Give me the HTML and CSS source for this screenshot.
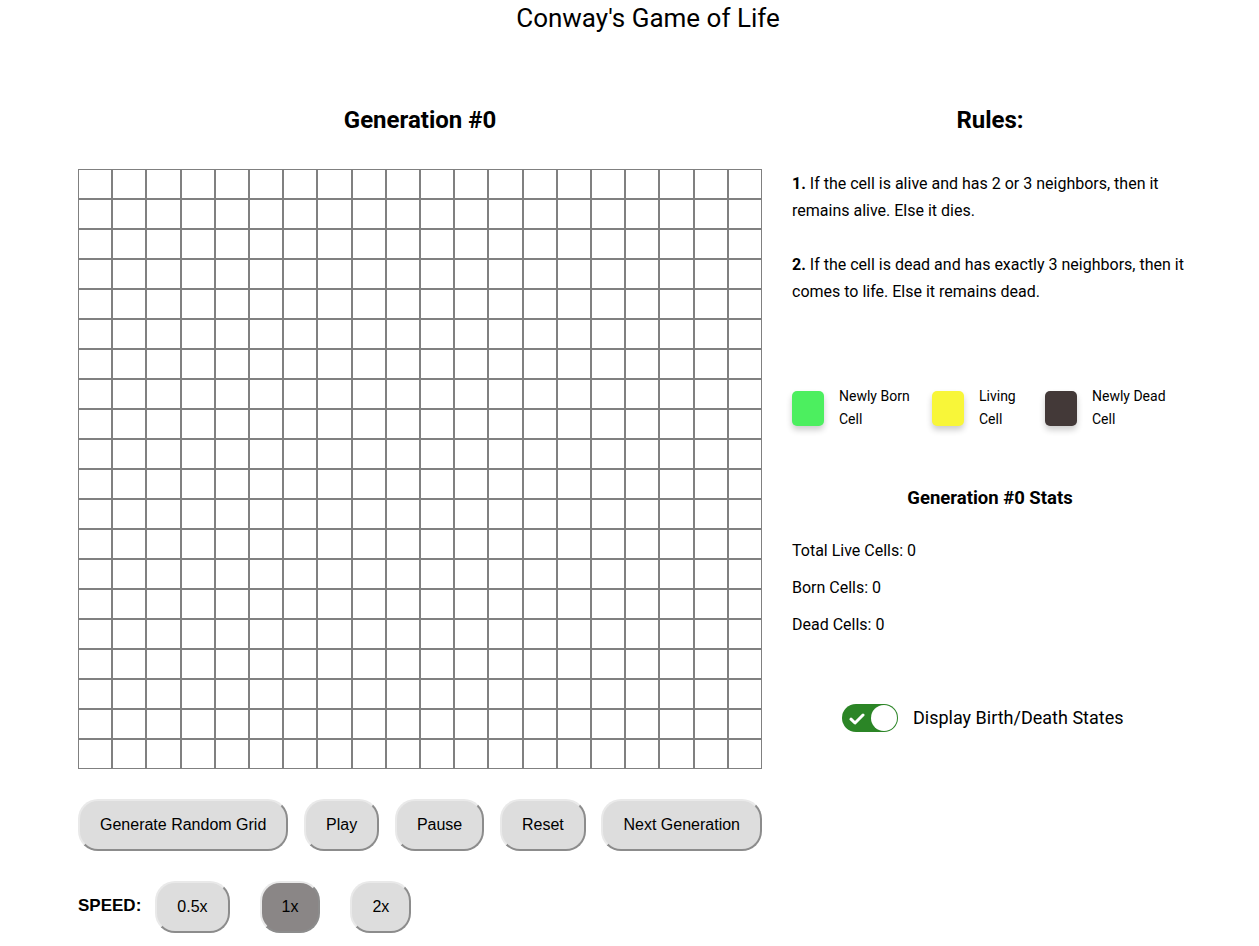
FILE: index.html
```html
<!DOCTYPE html>
<html lang="en">
<head>
<meta charset="utf-8">
<title>Conway's Game of Life</title>
<link rel="stylesheet" href="styles.css">
</head>
<body>
<h1 class="title">Conway's Game of Life</h1>
<main class="layout">
  <section class="board">
    <h2 class="section-title">Generation #0</h2>
    <div class="grid" id="grid"></div>
    <div class="controls">
      <button class="btn">Generate Random Grid</button>
      <button class="btn">Play</button>
      <button class="btn">Pause</button>
      <button class="btn">Reset</button>
      <button class="btn">Next Generation</button>
    </div>
    <div class="speed">
      <span class="speed-label">SPEED:</span>
      <button class="btn speed-btn">0.5x</button>
      <button class="btn speed-btn speed-btn--active">1x</button>
      <button class="btn speed-btn">2x</button>
    </div>
  </section>
  <aside class="side">
    <h2 class="section-title">Rules:</h2>
    <div class="rules">
      <p class="rule"><strong>1.</strong> If the cell is alive and has 2 or 3 neighbors, then it remains alive. Else it dies.</p>
      <p class="rule"><strong>2.</strong> If the cell is dead and has exactly 3 neighbors, then it comes to life. Else it remains dead.</p>
    </div>
    <div class="legend">
      <div class="legend-item">
        <span class="swatch swatch--born"></span>
        <span class="legend-text legend-text--born">Newly Born Cell</span>
      </div>
      <div class="legend-item">
        <span class="swatch swatch--living"></span>
        <span class="legend-text legend-text--living">Living Cell</span>
      </div>
      <div class="legend-item">
        <span class="swatch swatch--dead"></span>
        <span class="legend-text legend-text--dead">Newly Dead Cell</span>
      </div>
    </div>
    <h3 class="stats-title">Generation #0 Stats</h3>
    <div class="stats">
      <p class="stat">Total Live Cells: 0</p>
      <p class="stat">Born Cells: 0</p>
      <p class="stat">Dead Cells: 0</p>
    </div>
    <div class="toggle-row">
      <span class="toggle">
        <svg class="toggle-check" width="16" height="12" viewBox="0 0 16 12"><path d="M2 6.2 L6 10 L14 2" fill="none" stroke="#fff" stroke-width="3" stroke-linecap="round" stroke-linejoin="round"/></svg>
        <span class="toggle-knob"></span>
      </span>
      <span class="toggle-label">Display Birth/Death States</span>
    </div>
  </aside>
</main>
<script>
  (function () {
    var g = document.getElementById('grid');
    for (var i = 0; i < 400; i++) {
      var c = document.createElement('div');
      c.className = 'cell';
      g.appendChild(c);
    }
  })();
</script>
</body>
</html>
```

FILE: styles.css
```css
* { box-sizing: border-box; }

body {
  margin: 0;
  font-family: Roboto, "Liberation Sans", sans-serif;
  color: #000;
  background: #fff;
}

.title {
  margin: 0;
  padding-left: 78px;
  width: 1218px;
  text-align: center;
  font-size: 26px;
  font-weight: 400;
  line-height: 37px;
}

.layout {
  display: flex;
  margin-top: 68px;
  padding-left: 78px;
}

.board {
  width: 684px;
  flex: none;
}

.side {
  width: 396px;
  margin-left: 30px;
  flex: none;
}

.section-title {
  margin: 0;
  text-align: center;
  font-size: 24px;
  font-weight: 700;
  line-height: 30px;
}

.grid {
  margin-top: 34px;
  display: grid;
  grid-template-columns: repeat(20, 1fr);
  grid-auto-rows: 30px;
}

.cell {
  border: 1px solid #808080;
  background: #fff;
}

.controls {
  margin-top: 30px;
  display: flex;
  justify-content: space-between;
}

.btn {
  font-family: "Liberation Sans", Arial, sans-serif;
  font-size: 16px;
  line-height: 18px;
  color: #000;
  background: #dddddd;
  padding: 15px 20px;
  border: 2px solid;
  border-color: #e9e9e9 #8c8c8c #8c8c8c #e9e9e9;
  border-radius: 20px;
}

.speed {
  margin-top: 30px;
  display: flex;
  align-items: center;
}

.speed-label {
  font-family: "Liberation Sans", Arial, sans-serif;
  font-weight: 700;
  font-size: 17px;
  line-height: 18px;
  padding-bottom: 2px;
  margin-right: -1px;
}

.speed-btn {
  margin-left: 15px;
  margin-right: 15px;
}

.speed-btn:last-child { margin-right: 0; }

.speed-btn--active {
  background: #8a8686;
}

.rules {
  margin-top: 35px;
  font-size: 16px;
  line-height: 27px;
}

.rule {
  margin: 0 0 27px;
}

.rule:last-child { margin-bottom: 0; }

.legend {
  margin-top: 80px;
  display: flex;
  align-items: center;
  gap: 15px;
}

.legend-item {
  display: flex;
  align-items: center;
  gap: 15px;
}

.swatch {
  width: 32px;
  height: 35px;
  border-radius: 5px;
  box-shadow: 0 4px 6px rgba(0, 0, 0, 0.2);
  flex: none;
}

.swatch--born { background: #4cef5f; }
.swatch--living { background: #f8f639; }
.swatch--dead { background: #433938; }

.legend-text {
  font-size: 14px;
  line-height: 23px;
}

.legend-text--born { width: 78px; }
.legend-text--living { width: 51px; }
.legend-text--dead { width: 80px; }

.stats-title {
  margin: 55px 0 0;
  text-align: center;
  font-size: 18.5px;
  font-weight: 700;
  line-height: 24px;
}

.stats {
  margin-top: 30px;
}

.stat {
  margin: 0 0 15px;
  font-size: 16px;
  line-height: 22px;
}

.stat:last-child { margin-bottom: 0; }

.toggle-row {
  margin-top: 68px;
  padding-left: 50px;
  display: flex;
  align-items: center;
  gap: 15px;
}

.toggle {
  position: relative;
  width: 56px;
  height: 28px;
  border-radius: 14px;
  background: #2b8526;
  flex: none;
}

.toggle-check {
  position: absolute;
  left: 7px;
  top: 9px;
}

.toggle-knob {
  position: absolute;
  right: 1px;
  top: 1px;
  width: 26px;
  height: 26px;
  border-radius: 50%;
  background: #fff;
}

.toggle-label {
  font-size: 18px;
  line-height: 24px;
}
```
